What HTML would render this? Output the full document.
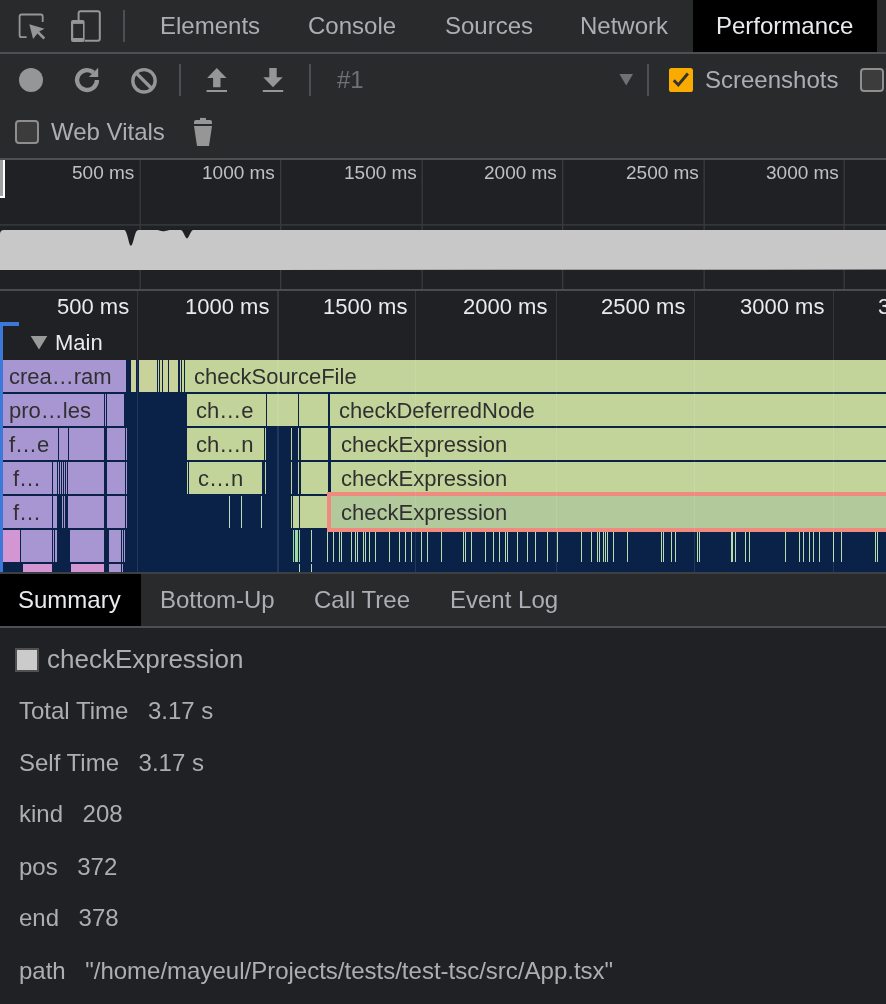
<!DOCTYPE html>
<html><head><meta charset="utf-8">
<style>
html,body{margin:0;padding:0;}
body{width:886px;height:1004px;overflow:hidden;position:relative;background:#202124;font-family:"Liberation Sans",sans-serif;}
.a{position:absolute;white-space:pre;line-height:1;will-change:transform;}
.bg{position:absolute;}
.t24{font-size:24px;}
.tab{color:#abafb4;}
.lb{margin-right:19.5px;}
.ovl{font-size:19px;color:#bdc1c6;}
.rl{font-size:22px;color:#e8eaed;}
.ft{font-size:22px;color:#303030;}
</style></head><body>
<!-- top tab bar -->
<div class="bg" style="left:0;top:0;width:886px;height:52px;background:#292a2c"></div>
<div class="bg" style="left:693px;top:0;width:184px;height:52px;background:#000"></div>
<div class="bg" style="left:0;top:52px;width:886px;height:2px;background:#4e4f52"></div>
<!-- toolbar -->
<div class="bg" style="left:0;top:54px;width:886px;height:104px;background:#292a2c"></div>
<div class="bg" style="left:0;top:158px;width:886px;height:2px;background:#4e4f52"></div>

<div id="tabs">
<span class="a t24 tab" style="left:160px;top:14px">Elements</span>
<span class="a t24 tab" style="left:307.5px;top:14px">Console</span>
<span class="a t24 tab" style="left:444.5px;top:14px">Sources</span>
<span class="a t24 tab" style="left:580px;top:14px">Network</span>
<span class="a t24" style="left:716px;top:14px;color:#e8eaed">Performance</span>
</div>


<!-- top icons -->
<svg class="bg" style="left:0;top:0" width="130" height="52" viewBox="0 0 130 52">
 <path d="M26.6 37.2 H21.6 a2 2 0 0 1 -2 -2 V16.5 a2 2 0 0 1 2 -2 H40.7 a2 2 0 0 1 2 2 V22" fill="none" stroke="#969696" stroke-width="1.8"/>
 <path d="M29.3 24.2 L44.5 28.8 L39.2 31.6 L45.2 37.6 L43.4 39.4 L37.4 33.4 L33.1 39 Z" fill="#969696"/>
 <path d="M78.6 19.9 V13.3 a2 2 0 0 1 2 -2 H97.8 a2 2 0 0 1 2 2 V38.8 a2 2 0 0 1 -2 2 H84.6" fill="none" stroke="#969696" stroke-width="2"/>
 <rect x="71" y="19.9" width="13.6" height="22.1" rx="2" fill="#969696"/>
 <rect x="73.2" y="23.9" width="9.8" height="14.1" fill="#292a2c"/>
 <rect x="123" y="10" width="2" height="32" fill="#4e4f52"/>
</svg>
<!-- toolbar row 2 icons -->
<svg class="bg" style="left:0;top:54px" width="886" height="104" viewBox="0 54 886 104">
 <circle cx="31" cy="80" r="12" fill="#969696"/>
 <path d="M96.95 80 A9.95 9.95 0 1 1 93.5 72.5" fill="none" stroke="#969696" stroke-width="4.3"/>
 <path d="M98.2 67.8 V76.9 H88.8 Z" fill="#969696"/>
 <circle cx="144" cy="80.8" r="11.2" fill="none" stroke="#969696" stroke-width="3.4"/>
 <path d="M136.3 73.1 L151.7 88.5" stroke="#969696" stroke-width="3.4"/>
 <rect x="179" y="64" width="2" height="32" fill="#4e4f52"/>
 <path d="M216.8 68 L226.5 78 H220.5 V87.2 H213.1 V78 H207.1 Z" fill="#969696"/>
 <rect x="206.6" y="90" width="20.4" height="2" fill="#969696"/>
 <path d="M269.3 68 H276.7 V77.2 H282.7 L273 87.2 L263.3 77.2 H269.3 Z" fill="#969696"/>
 <rect x="262.8" y="90" width="20.4" height="2" fill="#969696"/>
 <rect x="309" y="64" width="2" height="32" fill="#4e4f52"/>
 <path d="M619.4 74 H633 L626.2 85.5 Z" fill="#6e7175"/>
 <rect x="647" y="64" width="2" height="32" fill="#4e4f52"/>
 <rect x="669" y="68" width="24" height="24" rx="2.6" fill="#f9ab00"/>
 <path d="M673.8 80.3 L678.3 84.9 L687.9 73.5" fill="none" stroke="#333" stroke-width="2.9"/>
 <rect x="861" y="69" width="22" height="22" rx="3" fill="#3c3c3c" stroke="#8e8e8e" stroke-width="2"/>
 <rect x="16" y="121" width="22" height="22" rx="3" fill="#3c3c3c" stroke="#8e8e8e" stroke-width="2"/>
 <rect x="200" y="117.9" width="6" height="3" fill="#969696"/>
 <path d="M194 124 V121.9 a2 2 0 0 1 2 -2 H210 a2 2 0 0 1 2 2 V124 Z" fill="#969696"/>
 <path d="M194 126.1 H212 L209 146 H197 Z" fill="#969696"/>
</svg>
<span class="a t24" style="left:337px;top:68px;color:#6e7175">#1</span>
<span class="a t24 tab" style="left:705px;top:68px">Screenshots</span>
<span class="a t24 tab" style="left:51px;top:120px">Web Vitals</span>

<!-- overview -->
<div class="bg" style="left:0;top:160px;width:886px;height:129px;background:#202124"></div>
<div class="bg" style="left:0;top:289px;width:886px;height:2px;background:#4a4c50"></div>
<!-- overview content -->
<svg class="bg" style="left:0;top:160px" width="886" height="131" viewBox="0 160 886 131">
 <g fill="#3a3b3e">
  <rect x="139.5" y="160" width="1.3" height="129"/>
  <rect x="280" y="160" width="1.3" height="129"/>
  <rect x="421.5" y="160" width="1.3" height="129"/>
  <rect x="562" y="160" width="1.3" height="129"/>
  <rect x="703.5" y="160" width="1.3" height="129"/>
  <rect x="843.5" y="160" width="1.3" height="129"/>
  <rect x="0" y="224.2" width="886" height="1.4"/>
 </g>
 <path d="M0 270 V234 Q0 230 4 230 L124.2 230 C127.5 230.5 128.8 245.8 131 245.8 C133.2 245.8 134.5 232 137.2 230.6 C138.2 230.1 139 230 140 230 L156 230 C160 230 161 231.3 163.5 231.3 C166 231.3 167 230 171 230 L180.5 230 C183.5 230 185 238.4 187 238.4 C189 238.4 190.5 230 193.5 230 L886 230 V269.6 Z" fill="#c8c8c8"/>
 <rect x="0" y="160" width="5" height="38" fill="#fff"/>
 <rect x="0" y="160" width="3" height="36" fill="#a0a0a0"/>
</svg>
<span class="a ovl" style="left:72.1px;top:163px">500 ms</span>
<span class="a ovl" style="left:202.0px;top:163px">1000 ms</span>
<span class="a ovl" style="left:343.5px;top:163px">1500 ms</span>
<span class="a ovl" style="left:484.0px;top:163px">2000 ms</span>
<span class="a ovl" style="left:625.5px;top:163px">2500 ms</span>
<span class="a ovl" style="left:765.5px;top:163px">3000 ms</span>


<!-- flame chart -->
<div class="bg" style="left:0;top:291px;width:886px;height:281px;background:#202124"></div>
<div class="bg" style="left:0;top:360px;width:886px;height:212px;background:#0a2148"></div>
<div class="bg" style="left:0;top:572px;width:886px;height:2px;background:#3c4043"></div>
<!-- flame content -->
<span class="a rl" style="left:56.6px;top:296px">500 ms</span>
<span class="a rl" style="left:184.7px;top:296px">1000 ms</span>
<span class="a rl" style="left:322.5px;top:296px">1500 ms</span>
<span class="a rl" style="left:463.1px;top:296px">2000 ms</span>
<span class="a rl" style="left:600.9px;top:296px">2500 ms</span>
<span class="a rl" style="left:740.3px;top:296px">3000 ms</span>
<span class="a rl" style="left:877.5px;top:296px">3500 ms</span>
<div class="bg" style="left:0;top:322px;width:3px;height:250px;background:#3b78d8"></div>
<div class="bg" style="left:0;top:322px;width:19px;height:4px;background:#3b78d8"></div>
<svg class="bg" style="left:0;top:330px" width="60" height="26" viewBox="0 330 60 26"><path d="M30.7 336 H47.3 L39 349.5 Z" fill="#9a9a9a"/></svg>
<span class="a rl" style="left:55px;top:332px">Main</span>
<!-- BARS START -->
<div class="bg" style="left:3.0px;top:360px;width:123.0px;height:32px;background:#a896d2"></div>
<span class="a ft" style="left:9px;top:366px">crea…ram</span>
<div class="bg" style="left:131.0px;top:360px;width:5.1px;height:32px;background:#c9d29b"></div>
<div class="bg" style="left:139.2px;top:360px;width:17.5px;height:32px;background:#c9d29b"></div>
<div class="bg" style="left:157.7px;top:360px;width:1.3px;height:32px;background:#c9d29b"></div>
<div class="bg" style="left:160.0px;top:360px;width:1.5px;height:32px;background:#c9d29b"></div>
<div class="bg" style="left:162.5px;top:360px;width:5.8px;height:32px;background:#c9d29b"></div>
<div class="bg" style="left:169.3px;top:360px;width:9.2px;height:32px;background:#c9d29b"></div>
<div class="bg" style="left:179.5px;top:360px;width:1.5px;height:32px;background:#c9d29b"></div>
<div class="bg" style="left:182.0px;top:360px;width:1.5px;height:32px;background:#c9d29b"></div>
<div class="bg" style="left:184.8px;top:360px;width:701.2px;height:32px;background:#c2d49a"></div>
<span class="a ft" style="left:194px;top:366px">checkSourceFile</span>
<div class="bg" style="left:3.0px;top:394px;width:101.0px;height:32px;background:#a896d2"></div>
<div class="bg" style="left:105.0px;top:394px;width:1.0px;height:32px;background:#a896d2"></div>
<div class="bg" style="left:106.7px;top:394px;width:17.5px;height:32px;background:#a896d2"></div>
<span class="a ft" style="left:9px;top:400px">pro…les</span>
<div class="bg" style="left:187.0px;top:394px;width:78.8px;height:32px;background:#c2d49a"></div>
<span class="a ft" style="left:196px;top:400px">ch…e</span>
<div class="bg" style="left:267.0px;top:394px;width:31.2px;height:32px;background:#c2d49a"></div>
<div class="bg" style="left:299.2px;top:394px;width:29.2px;height:32px;background:#c2d49a"></div>
<div class="bg" style="left:329.5px;top:394px;width:556.5px;height:32px;background:#c2d49a"></div>
<span class="a ft" style="left:339px;top:400px">checkDeferredNode</span>
<div class="bg" style="left:3.0px;top:428px;width:55.0px;height:32px;background:#a896d2"></div>
<div class="bg" style="left:59.0px;top:428px;width:9.0px;height:32px;background:#a896d2"></div>
<div class="bg" style="left:68.8px;top:428px;width:35.2px;height:32px;background:#a896d2"></div>
<div class="bg" style="left:106.7px;top:428px;width:18.3px;height:32px;background:#a896d2"></div>
<div class="bg" style="left:125.5px;top:428px;width:1.0px;height:32px;background:#a896d2"></div>
<span class="a ft" style="left:9px;top:434px">f…e</span>
<div class="bg" style="left:187.0px;top:428px;width:77.0px;height:32px;background:#c2d49a"></div>
<span class="a ft" style="left:196px;top:434px">ch…n</span>
<div class="bg" style="left:265.0px;top:428px;width:1.0px;height:32px;background:#c2d49a"></div>
<div class="bg" style="left:291.3px;top:428px;width:1.0px;height:32px;background:#c2d49a"></div>
<div class="bg" style="left:298.3px;top:428px;width:1.0px;height:32px;background:#c2d49a"></div>
<div class="bg" style="left:300.6px;top:428px;width:27.4px;height:32px;background:#c2d49a"></div>
<div class="bg" style="left:330.6px;top:428px;width:555.4px;height:32px;background:#c2d49a"></div>
<span class="a ft" style="left:341px;top:434px">checkExpression</span>
<div class="bg" style="left:3.0px;top:462px;width:49.0px;height:32px;background:#a896d2"></div>
<div class="bg" style="left:52.8px;top:462px;width:4.6px;height:32px;background:#a896d2"></div>
<div class="bg" style="left:57.9px;top:462px;width:1.0px;height:32px;background:#a896d2"></div>
<div class="bg" style="left:59.9px;top:462px;width:1.0px;height:32px;background:#a896d2"></div>
<div class="bg" style="left:61.9px;top:462px;width:1.0px;height:32px;background:#a896d2"></div>
<div class="bg" style="left:63.9px;top:462px;width:1.0px;height:32px;background:#a896d2"></div>
<div class="bg" style="left:65.9px;top:462px;width:1.0px;height:32px;background:#a896d2"></div>
<div class="bg" style="left:68.4px;top:462px;width:35.6px;height:32px;background:#a896d2"></div>
<div class="bg" style="left:106.7px;top:462px;width:18.3px;height:32px;background:#a896d2"></div>
<div class="bg" style="left:125.5px;top:462px;width:1.0px;height:32px;background:#a896d2"></div>
<span class="a ft" style="left:13px;top:468px">f…</span>
<div class="bg" style="left:186.9px;top:462px;width:1.0px;height:32px;background:#c2d49a"></div>
<div class="bg" style="left:188.7px;top:462px;width:73.6px;height:32px;background:#c2d49a"></div>
<span class="a ft" style="left:198px;top:468px">c…n</span>
<div class="bg" style="left:264.9px;top:462px;width:1.0px;height:32px;background:#c2d49a"></div>
<div class="bg" style="left:291.3px;top:462px;width:1.0px;height:32px;background:#c2d49a"></div>
<div class="bg" style="left:298.3px;top:462px;width:1.0px;height:32px;background:#c2d49a"></div>
<div class="bg" style="left:301.0px;top:462px;width:27.0px;height:32px;background:#c2d49a"></div>
<div class="bg" style="left:330.6px;top:462px;width:555.4px;height:32px;background:#c2d49a"></div>
<span class="a ft" style="left:341px;top:468px">checkExpression</span>
<div class="bg" style="left:3.0px;top:496px;width:49.0px;height:32px;background:#a896d2"></div>
<div class="bg" style="left:52.8px;top:496px;width:4.6px;height:32px;background:#a896d2"></div>
<div class="bg" style="left:62.3px;top:496px;width:1.0px;height:32px;background:#a896d2"></div>
<div class="bg" style="left:64.1px;top:496px;width:1.0px;height:32px;background:#a896d2"></div>
<div class="bg" style="left:68.4px;top:496px;width:35.6px;height:32px;background:#a896d2"></div>
<div class="bg" style="left:107.4px;top:496px;width:17.6px;height:32px;background:#a896d2"></div>
<div class="bg" style="left:125.5px;top:496px;width:1.0px;height:32px;background:#a896d2"></div>
<span class="a ft" style="left:13px;top:502px">f…</span>
<div class="bg" style="left:229.2px;top:496px;width:1.0px;height:32px;background:#b8dcc0"></div>
<div class="bg" style="left:241.2px;top:496px;width:1.0px;height:32px;background:#b8dcc0"></div>
<div class="bg" style="left:261.0px;top:496px;width:1.0px;height:32px;background:#b8dcc0"></div>
<div class="bg" style="left:291.3px;top:496px;width:1.0px;height:32px;background:#c2d49a"></div>
<div class="bg" style="left:293.0px;top:496px;width:5.0px;height:32px;background:#c2d49a"></div>
<div class="bg" style="left:298.3px;top:496px;width:1.0px;height:32px;background:#c2d49a"></div>
<div class="bg" style="left:300.0px;top:496px;width:27.3px;height:32px;background:#c2d49a"></div>
<div class="bg" style="left:3.0px;top:530px;width:17.0px;height:32px;background:#d296d2"></div>
<div class="bg" style="left:20.5px;top:530px;width:1.0px;height:32px;background:#a896d2"></div>
<div class="bg" style="left:22.0px;top:530px;width:30.0px;height:32px;background:#a896d2"></div>
<div class="bg" style="left:52.5px;top:530px;width:1.0px;height:32px;background:#a896d2"></div>
<div class="bg" style="left:54.5px;top:530px;width:1.0px;height:32px;background:#a896d2"></div>
<div class="bg" style="left:56.2px;top:530px;width:1.2px;height:32px;background:#a896d2"></div>
<div class="bg" style="left:69.7px;top:530px;width:34.3px;height:32px;background:#a896d2"></div>
<div class="bg" style="left:109.0px;top:530px;width:11.5px;height:32px;background:#a896d2"></div>
<div class="bg" style="left:121.5px;top:530px;width:1.0px;height:32px;background:#a896d2"></div>
<div class="bg" style="left:124.0px;top:530px;width:1.0px;height:32px;background:#a896d2"></div>
<div class="bg" style="left:293.3px;top:530px;width:1.0px;height:32px;background:#9fd8a8"></div>
<div class="bg" style="left:294.9px;top:530px;width:3.4px;height:32px;background:#9fd8a8"></div>
<div class="bg" style="left:299.1px;top:530px;width:1.0px;height:32px;background:#9fd8a8"></div>
<div class="bg" style="left:311.1px;top:530px;width:1.0px;height:32px;background:#b8dcb0"></div>
<div class="bg" style="left:326.9px;top:530px;width:1.0px;height:32px;background:#b8dcb0"></div>
<div class="bg" style="left:333.0px;top:530px;width:1.0px;height:32px;background:#b8dcb0"></div>
<div class="bg" style="left:338.8px;top:530px;width:1.0px;height:32px;background:#b8dcb0"></div>
<div class="bg" style="left:340.9px;top:530px;width:1.0px;height:32px;background:#b8dcb0"></div>
<div class="bg" style="left:350.9px;top:530px;width:1.0px;height:32px;background:#b8dcb0"></div>
<div class="bg" style="left:355.1px;top:530px;width:1.0px;height:32px;background:#b8dcb0"></div>
<div class="bg" style="left:357.0px;top:530px;width:1.0px;height:32px;background:#b8dcb0"></div>
<div class="bg" style="left:363.1px;top:530px;width:1.0px;height:32px;background:#b8dcb0"></div>
<div class="bg" style="left:365.1px;top:530px;width:1.0px;height:32px;background:#b8dcb0"></div>
<div class="bg" style="left:368.9px;top:530px;width:1.0px;height:32px;background:#b8dcb0"></div>
<div class="bg" style="left:375.0px;top:530px;width:1.0px;height:32px;background:#b8dcb0"></div>
<div class="bg" style="left:388.9px;top:530px;width:1.0px;height:32px;background:#b8dcb0"></div>
<div class="bg" style="left:398.9px;top:530px;width:1.0px;height:32px;background:#b8dcb0"></div>
<div class="bg" style="left:405.0px;top:530px;width:1.0px;height:32px;background:#b8dcb0"></div>
<div class="bg" style="left:410.9px;top:530px;width:1.0px;height:32px;background:#b8dcb0"></div>
<div class="bg" style="left:420.6px;top:530px;width:1.0px;height:32px;background:#b8dcb0"></div>
<div class="bg" style="left:427.0px;top:530px;width:1.0px;height:32px;background:#b8dcb0"></div>
<div class="bg" style="left:441.1px;top:530px;width:1.0px;height:32px;background:#b8dcb0"></div>
<div class="bg" style="left:462.5px;top:530px;width:1.0px;height:32px;background:#b8dcb0"></div>
<div class="bg" style="left:464.6px;top:530px;width:1.0px;height:32px;background:#b8dcb0"></div>
<div class="bg" style="left:471.0px;top:530px;width:1.0px;height:32px;background:#b8dcb0"></div>
<div class="bg" style="left:485.1px;top:530px;width:1.0px;height:32px;background:#b8dcb0"></div>
<div class="bg" style="left:493.1px;top:530px;width:1.0px;height:32px;background:#b8dcb0"></div>
<div class="bg" style="left:499.2px;top:530px;width:1.0px;height:32px;background:#b8dcb0"></div>
<div class="bg" style="left:505.1px;top:530px;width:1.0px;height:32px;background:#b8dcb0"></div>
<div class="bg" style="left:507.1px;top:530px;width:1.0px;height:32px;background:#b8dcb0"></div>
<div class="bg" style="left:516.8px;top:530px;width:1.0px;height:32px;background:#b8dcb0"></div>
<div class="bg" style="left:527.1px;top:530px;width:1.0px;height:32px;background:#b8dcb0"></div>
<div class="bg" style="left:535.0px;top:530px;width:1.0px;height:32px;background:#b8dcb0"></div>
<div class="bg" style="left:547.3px;top:530px;width:1.0px;height:32px;background:#b8dcb0"></div>
<div class="bg" style="left:557.0px;top:530px;width:1.0px;height:32px;background:#b8dcb0"></div>
<div class="bg" style="left:581.1px;top:530px;width:1.0px;height:32px;background:#b8dcb0"></div>
<div class="bg" style="left:590.8px;top:530px;width:1.0px;height:32px;background:#b8dcb0"></div>
<div class="bg" style="left:596.6px;top:530px;width:1.0px;height:32px;background:#b8dcb0"></div>
<div class="bg" style="left:599.0px;top:530px;width:1.0px;height:32px;background:#b8dcb0"></div>
<div class="bg" style="left:603.1px;top:530px;width:1.0px;height:32px;background:#b8dcb0"></div>
<div class="bg" style="left:604.9px;top:530px;width:1.0px;height:32px;background:#b8dcb0"></div>
<div class="bg" style="left:606.9px;top:530px;width:1.0px;height:32px;background:#b8dcb0"></div>
<div class="bg" style="left:613.4px;top:530px;width:1.0px;height:32px;background:#b8dcb0"></div>
<div class="bg" style="left:627.0px;top:530px;width:1.0px;height:32px;background:#b8dcb0"></div>
<div class="bg" style="left:660.7px;top:530px;width:1.0px;height:32px;background:#b8dcb0"></div>
<div class="bg" style="left:663.1px;top:530px;width:1.0px;height:32px;background:#b8dcb0"></div>
<div class="bg" style="left:671.0px;top:530px;width:1.0px;height:32px;background:#b8dcb0"></div>
<div class="bg" style="left:674.8px;top:530px;width:1.0px;height:32px;background:#b8dcb0"></div>
<div class="bg" style="left:696.8px;top:530px;width:1.0px;height:32px;background:#b8dcb0"></div>
<div class="bg" style="left:698.9px;top:530px;width:1.0px;height:32px;background:#b8dcb0"></div>
<div class="bg" style="left:730.5px;top:530px;width:1.0px;height:32px;background:#b8dcb0"></div>
<div class="bg" style="left:732.0px;top:530px;width:1.0px;height:32px;background:#b8dcb0"></div>
<div class="bg" style="left:734.7px;top:530px;width:1.0px;height:32px;background:#b8dcb0"></div>
<div class="bg" style="left:744.9px;top:530px;width:1.0px;height:32px;background:#b8dcb0"></div>
<div class="bg" style="left:748.7px;top:530px;width:1.0px;height:32px;background:#b8dcb0"></div>
<div class="bg" style="left:785.4px;top:530px;width:1.0px;height:32px;background:#b8dcb0"></div>
<div class="bg" style="left:798.6px;top:530px;width:1.0px;height:32px;background:#b8dcb0"></div>
<div class="bg" style="left:803.0px;top:530px;width:1.0px;height:32px;background:#b8dcb0"></div>
<div class="bg" style="left:808.9px;top:530px;width:1.0px;height:32px;background:#b8dcb0"></div>
<div class="bg" style="left:813.3px;top:530px;width:1.0px;height:32px;background:#b8dcb0"></div>
<div class="bg" style="left:818.6px;top:530px;width:1.0px;height:32px;background:#b8dcb0"></div>
<div class="bg" style="left:833.2px;top:530px;width:1.0px;height:32px;background:#b8dcb0"></div>
<div class="bg" style="left:841.2px;top:530px;width:1.0px;height:32px;background:#b8dcb0"></div>
<div class="bg" style="left:874.9px;top:530px;width:1.0px;height:32px;background:#b8dcb0"></div>
<div class="bg" style="left:877.3px;top:530px;width:1.0px;height:32px;background:#b8dcb0"></div>
<div class="bg" style="left:23.0px;top:564px;width:29.0px;height:8px;background:#d296d2"></div>
<div class="bg" style="left:71.0px;top:564px;width:33.0px;height:8px;background:#d296d2"></div>
<div class="bg" style="left:109.0px;top:564px;width:11.5px;height:8px;background:#a896d2"></div>
<div class="bg" style="left:121.5px;top:564px;width:1.0px;height:8px;background:#a896d2"></div>
<div class="bg" style="left:299.1px;top:564px;width:1.0px;height:8px;background:#b8dcb0"></div>
<div class="bg" style="left:311.1px;top:564px;width:1.0px;height:8px;background:#b8dcb0"></div>
<!-- BARS END -->
<div class="bg" style="left:327px;top:492px;width:580px;height:40px;box-sizing:border-box;border:4px solid #f08a7e;background:#b1c99b"></div>
<span class="a ft" style="left:341px;top:502px">checkExpression</span>
<!-- GRID START -->
<div class="bg" style="left:137.1px;top:291px;width:1.3px;height:281px;background:rgba(255,255,255,0.1)"></div>
<div class="bg" style="left:277.4px;top:291px;width:1.3px;height:281px;background:rgba(255,255,255,0.1)"></div>
<div class="bg" style="left:415.2px;top:291px;width:1.3px;height:281px;background:rgba(255,255,255,0.1)"></div>
<div class="bg" style="left:555.8px;top:291px;width:1.3px;height:281px;background:rgba(255,255,255,0.1)"></div>
<div class="bg" style="left:693.6px;top:291px;width:1.3px;height:281px;background:rgba(255,255,255,0.1)"></div>
<div class="bg" style="left:833.0px;top:291px;width:1.3px;height:281px;background:rgba(255,255,255,0.1)"></div>
<!-- GRID END -->


<!-- summary tabs -->
<div class="bg" style="left:0;top:574px;width:886px;height:52px;background:#292a2c"></div>
<div class="bg" style="left:0;top:574px;width:141px;height:52px;background:#000"></div>
<div class="bg" style="left:0;top:626px;width:886px;height:2px;background:#4e4f52"></div>
<span class="a t24" style="left:17.5px;top:588px;color:#e8eaed">Summary</span>
<span class="a t24 tab" style="left:160px;top:588px">Bottom-Up</span>
<span class="a t24 tab" style="left:314px;top:588px">Call Tree</span>
<span class="a t24 tab" style="left:450px;top:588px">Event Log</span>


<!-- summary content -->
<div class="bg" style="left:15px;top:648px;width:24px;height:24px;box-sizing:border-box;border:2px solid #505050;background:#cbcbcb"></div>
<span class="a" style="font-size:26px;color:#abafb4;left:47px;top:646.3px">checkExpression</span>
<div class="a t24 tab" style="left:19.3px;top:698.5px"><span class="lb">Total Time</span>3.17 s</div>
<div class="a t24 tab" style="left:19.3px;top:750.7px"><span class="lb">Self Time</span>3.17 s</div>
<div class="a t24 tab" style="left:19.3px;top:802.3px"><span class="lb">kind</span>208</div>
<div class="a t24 tab" style="left:19.3px;top:854.7px"><span class="lb">pos</span>372</div>
<div class="a t24 tab" style="left:19.3px;top:906.4px"><span class="lb">end</span>378</div>
<div class="a t24 tab" style="left:19.3px;top:959.3px"><span class="lb">path</span>"/home/mayeul/Projects/tests/test-tsc/src/App.tsx"</div>
</body></html>
